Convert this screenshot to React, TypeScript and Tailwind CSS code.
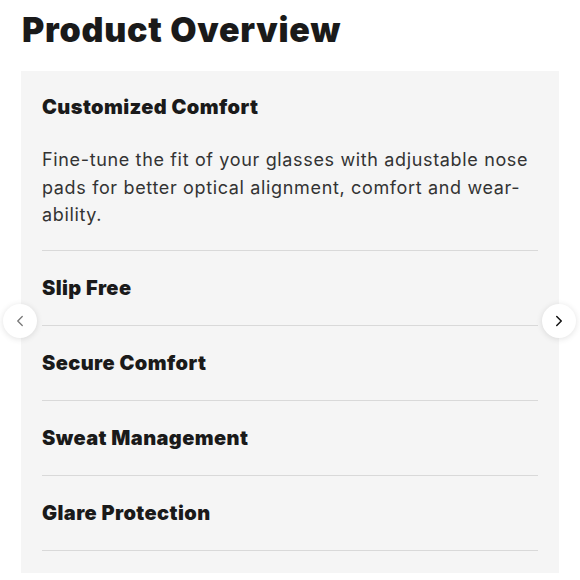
import { ChevronLeft, ChevronRight } from "lucide-react";

const items = ["Slip Free", "Secure Comfort", "Sweat Management", "Glare Protection"];

export default function App() {
  return (
    <div className="relative h-[580px] w-[580px] overflow-hidden bg-white font-['Inter',sans-serif] text-[#1a1a1a]">
      <h1 className="px-[22px] pt-[8px] text-[34px] font-black leading-[44px] tracking-[0.75px]">
        Product Overview
      </h1>
      <div className="mx-[21px] mt-[19px] bg-[#f5f5f5] px-[21px] pb-[22px]">
        <div className="border-b border-[#d9d9d9] pb-[21px]">
          <h2 className="pt-[24px] text-[20px] font-black leading-[24px] tracking-[0.4px]">Customized Comfort</h2>
          <p className="mt-[27px] text-[18px] leading-[27.5px] tracking-[0.65px] text-[#333]">
            Fine-tune the fit of your glasses with adjustable nose pads for better optical alignment, comfort and wear-ability.
          </p>
        </div>
        {items.map((label) => (
          <div key={label} className="flex h-[75px] items-center border-b border-[#d9d9d9]">
            <h3 className="text-[20px] font-black leading-[24px] tracking-[0.4px]">{label}</h3>
          </div>
        ))}
      </div>
      <button
        type="button"
        aria-label="Previous"
        className="absolute left-[3px] top-[304px] flex h-[34px] w-[34px] items-center justify-center rounded-full bg-white shadow-[0_1px_6px_rgba(0,0,0,0.12)]"
      >
        <ChevronLeft className="h-[18px] w-[18px] text-[#777]" strokeWidth={1.75} />
      </button>
      <button
        type="button"
        aria-label="Next"
        className="absolute left-[542px] top-[304px] flex h-[34px] w-[34px] items-center justify-center rounded-full bg-white shadow-[0_1px_6px_rgba(0,0,0,0.12)]"
      >
        <ChevronRight className="h-[18px] w-[18px] text-[#111]" strokeWidth={2} />
      </button>
    </div>
  );
}
